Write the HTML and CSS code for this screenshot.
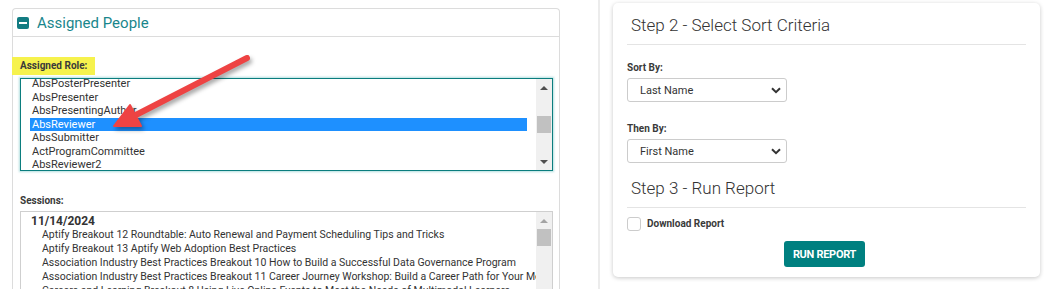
FILE: index.html
```html
<!DOCTYPE html>
<html lang="en">
<head>
    <meta charset="UTF-8">
    <meta name="viewport" content="width=device-width, initial-scale=1.0">
    <title>Report Setup</title>
    <link rel="stylesheet" href="styles.css">
</head>
<body>
    <div class="page">
        <div class="left-col">
            <div class="panel">
                <div class="panel-head">
                    <span class="toggle-icon"></span>
                    <span class="panel-title">Assigned People</span>
                </div>
                <div class="panel-body">
                    <div class="field-label hl">Assigned Role:</div>
                    <div class="listbox role-list">
                        <div class="list-view">
                            <div class="list-items">
                                <div class="opt">AbsPosterPresenter</div>
                                <div class="opt">AbsPresenter</div>
                                <div class="opt">AbsPresentingAuthor</div>
                                <div class="opt selected">AbsReviewer</div>
                                <div class="opt">AbsSubmitter</div>
                                <div class="opt">ActProgramCommittee</div>
                                <div class="opt">AbsReviewer2</div>
                            </div>
                        </div>
                        <div class="vscroll">
                            <div class="sb-btn"><span class="arr up"></span></div>
                            <div class="sb-track"><div class="sb-thumb role-thumb"></div></div>
                            <div class="sb-btn"><span class="arr down"></span></div>
                        </div>
                    </div>

                    <div class="field-label sessions-label">Sessions:</div>
                    <div class="listbox session-list">
                        <div class="list-view">
                            <div class="group-date">11/14/2024</div>
                            <div class="sess">Aptify Breakout 12 Roundtable: Auto Renewal and Payment Scheduling Tips and Tricks</div>
                            <div class="sess">Aptify Breakout 13 Aptify Web Adoption Best Practices</div>
                            <div class="sess">Association Industry Best Practices Breakout 10 How to Build a Successful Data Governance Program</div>
                            <div class="sess">Association Industry Best Practices Breakout 11 Career Journey Workshop: Build a Career Path for Your Members</div>
                            <div class="sess">Careers and Learning Breakout 8 Using Live Online Events to Meet the Needs of Multimodal Learners</div>
                        </div>
                        <div class="vscroll">
                            <div class="sb-btn"><span class="arr up light"></span></div>
                            <div class="sb-track"><div class="sb-thumb"></div></div>
                        </div>
                    </div>
                </div>
            </div>
        </div>

        <div class="right-col">
            <div class="card">
                <h2 class="step-title">Step 2 - Select Sort Criteria</h2>
                <hr class="rule">
                <div class="field-label">Sort By:</div>
                <div class="select-box">
                    <span>Last Name</span>
                    <svg class="chev" width="10" height="7" viewBox="0 0 10 7"><path d="M1 1.2 L5 5.2 L9 1.2" fill="none" stroke="#333" stroke-width="2"/></svg>
                </div>
                <div class="field-label then-label">Then By:</div>
                <div class="select-box">
                    <span>First Name</span>
                    <svg class="chev" width="10" height="7" viewBox="0 0 10 7"><path d="M1 1.2 L5 5.2 L9 1.2" fill="none" stroke="#333" stroke-width="2"/></svg>
                </div>
                <h2 class="step-title step3">Step 3 - Run Report</h2>
                <hr class="rule">
                <label class="check-row">
                    <span class="checkbox"></span>
                    <span class="field-label">Download Report</span>
                </label>
                <div class="btn-row">
                    <button class="run-btn">RUN REPORT</button>
                </div>
            </div>
        </div>

        <!-- annotation arrow drawn over the screenshot -->
        <svg class="annot-arrow" width="1045" height="289" viewBox="0 0 1045 289">
            <line x1="247" y1="58" x2="128" y2="119" stroke="#ee4343" stroke-width="6" stroke-linecap="round"/>
            <polygon points="114,126 130,105 141,126" fill="#ee4343" stroke="#ee4343" stroke-width="2" stroke-linejoin="round"/>
        </svg>
    </div>
</body>
</html>
```

FILE: styles.css
```css
body {
    font-family: Roboto, "Liberation Sans", Arial, sans-serif;
    margin: 0;
    padding: 0;
    background-color: #fff;
    color: #333;
}
.page {
    position: relative;
    display: flex;
    width: 1045px;
    height: 289px;
    overflow: hidden;
}
.left-col {
    width: 586px;
    padding: 8px 0 0 12px;
    border-right: 2px solid #ececec;
}
.panel {
    width: 546px;
    border: 1px solid #dcdcdc;
    border-bottom: none;
    border-radius: 4px 4px 0 0;
    height: 300px;
}
.panel-head {
    display: flex;
    align-items: center;
    height: 27px;
    border-bottom: 1px solid #dcdcdc;
    padding-left: 4px;
}
.toggle-icon {
    position: relative;
    width: 12px;
    height: 12px;
    border-radius: 2px;
    background-color: #137c82;
    margin-right: 8px;
}
.toggle-icon::after {
    content: "";
    position: absolute;
    left: 2px;
    top: 5px;
    width: 8px;
    height: 2px;
    background-color: #fff;
}
.panel-title {
    font-size: 15px;
    color: #19868c;
}
.panel-body {
    padding: 20px 6px 0 7px;
}
.field-label {
    font-size: 10px;
    font-weight: 700;
    color: #3a3a3a;
    line-height: 14px;
}
.hl {
    width: max-content;
    background-color: #f6f24d;
    margin-left: -8px;
    padding: 2px 8px 2px 8px;
    margin-bottom: 3px;
}
.listbox {
    display: flex;
    background-color: #fff;
    overflow: hidden;
}
.role-list {
    height: 91px;
    border: 1px solid #0b7d7e;
    box-shadow: 0 0 2px 1px rgba(0, 150, 150, 0.3);
}
.list-view {
    flex: 1;
    overflow: hidden;
    padding: 0 9px;
}
.list-items {
    margin-top: -2px;
}
.opt {
    font-size: 11px;
    line-height: 13.5px;
    padding-left: 2px;
    white-space: nowrap;
}
.opt.selected {
    background-color: #1e90ff;
    color: #fff;
}
.vscroll {
    width: 16px;
    display: flex;
    flex-direction: column;
    background-color: #f0f0f0;
}
.sb-btn {
    height: 17px;
    display: flex;
    align-items: center;
    justify-content: center;
}
.sb-track {
    flex: 1;
}
.sb-thumb {
    height: 17px;
    margin: 0 1px;
    background-color: #c1c1c1;
}
.role-thumb {
    margin-top: 20px;
}
.arr {
    width: 0;
    height: 0;
    border-left: 4px solid transparent;
    border-right: 4px solid transparent;
}
.arr.up {
    border-bottom: 4px solid #505050;
}
.arr.down {
    border-top: 4px solid #505050;
}
.arr.up.light {
    border-bottom-color: #a3a3a3;
}
.sessions-label {
    margin-top: 23px;
    margin-bottom: 3px;
}
.session-list {
    height: 120px;
    border: 1px solid #cfcfcf;
}
.session-list .list-view {
    padding: 3px 0 0 10px;
}
.group-date {
    font-size: 12px;
    font-weight: 700;
    line-height: 13px;
}
.sess {
    font-size: 10.5px;
    line-height: 13.9px;
    padding-left: 11px;
    white-space: nowrap;
}
.right-col {
    padding: 3px 0 0 13px;
}
.card {
    width: 399px;
    height: 264px;
    padding: 10px 14px 0 14px;
    background-color: #fff;
    border-radius: 5px;
    box-shadow: 0 1px 4px rgba(0, 0, 0, 0.22);
}
.step-title {
    margin: 0;
    padding-left: 4px;
    font-size: 17px;
    font-weight: 300;
    line-height: 24px;
    color: #333;
}
.rule {
    margin: 7px 0 0 0;
    border: none;
    border-top: 1px solid #e4e4e4;
}
.card .rule + .field-label {
    margin-top: 16px;
}
.then-label {
    margin-top: 20px;
}
.select-box {
    display: flex;
    align-items: center;
    justify-content: space-between;
    height: 22px;
    margin-top: 3px;
    padding: 0 5px 0 12px;
    width: 141px;
    border: 1px solid #cccccc;
    border-radius: 3px;
    font-size: 11px;
    color: #333;
}
.step3 {
    margin-top: 13px;
}
.check-row {
    display: flex;
    align-items: center;
    margin-top: 9px;
}
.checkbox {
    width: 12px;
    height: 12px;
    border: 1px solid #cccccc;
    border-radius: 3px;
    margin-right: 6px;
}
.btn-row {
    display: flex;
    justify-content: center;
    margin-top: 10px;
}
.run-btn {
    width: 81px;
    height: 26px;
    border: none;
    border-radius: 3px;
    background-color: #008080;
    color: #fff;
    font-family: Roboto, "Liberation Sans", Arial, sans-serif;
    font-size: 11px;
    font-weight: 700;
    letter-spacing: -0.3px;
    padding: 0;
    margin-left: -4px;
}
.annot-arrow {
    position: absolute;
    left: 0;
    top: 0;
    filter: drop-shadow(2px 3px 2px rgba(0, 0, 0, 0.35));
    pointer-events: none;
}
```
